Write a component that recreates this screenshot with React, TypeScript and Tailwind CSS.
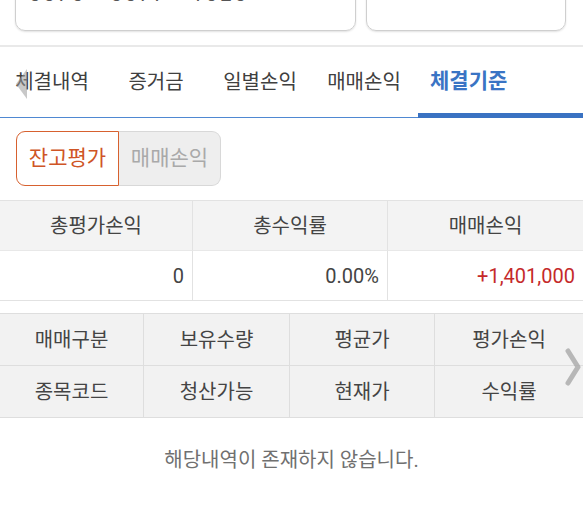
import React from "react";

const FONT = "font-['Roboto','Noto_Sans_CJK_KR',sans-serif]";

const tabs = ["체결내역", "증거금", "일별손익", "매매손익"];

const summary = [
  { label: "총평가손익", value: "0", red: false },
  { label: "총수익률", value: "0.00%", red: false },
  { label: "매매손익", value: "+1,401,000", red: true },
];

const gridRows = [
  ["매매구분", "보유수량", "평균가", "평가손익"],
  ["종목코드", "청산가능", "현재가", "수익률"],
];

export default function App() {
  return (
    <div className={`relative w-[583px] h-[517px] overflow-hidden bg-white ${FONT}`}>
      {/* account inputs, scrolled mostly out of view */}
      <div className="flex h-[45px] items-end pb-[14px]">
        <div className="ml-[15px] w-[341px] h-[70px] rounded-[10px] border border-[#cfcfcf] shadow-[0_1px_2px_rgba(0,0,0,0.12)] flex items-start pl-[13px] pt-[22px]">
          <span className="text-[20px] leading-none tracking-[3px] text-[#555]">5575 - 5577 - 1025</span>
        </div>
        <div className="ml-[10px] w-[200px] h-[70px] rounded-[10px] border border-[#cfcfcf] shadow-[0_1px_2px_rgba(0,0,0,0.12)]" />
      </div>
      <div className="h-[2px] bg-[#e9e9e9]" />

      {/* tabs */}
      <div className="relative flex h-[71px] border-b border-[#4f88d2]">
        {tabs.map((t) => (
          <div key={t} className="w-[104px] flex items-center justify-center text-[20px] text-[#404040]">
            {t}
          </div>
        ))}
        <div className="relative flex-1 flex items-center pl-[14px] text-[21px] font-bold text-[#3a74c4]">
          체결기준
          <div className="absolute left-[2px] right-0 bottom-[-1px] h-[5px] bg-[#3a72c2]" />
        </div>
        {/* left scroll hint */}
        <svg className="absolute left-[13px] top-[20px]" width="16" height="34" viewBox="0 0 16 34">
          <path d="M14 2 L3 17 L14 32 Z" fill="#9a9a9a" fillOpacity="0.55" />
        </svg>
      </div>

      {/* segment */}
      <div className="flex pl-[16px] pt-[13px]">
        <button className="w-[103px] h-[55px] rounded-l-[9px] border border-[#d7612f] bg-white text-[21px] text-[#cf5526]">
          잔고평가
        </button>
        <button className="w-[102px] h-[55px] rounded-r-[9px] border border-l-0 border-[#d8d8d8] bg-[#eeeeee] text-[21px] text-[#a9a9a9]">
          매매손익
        </button>
      </div>

      {/* summary table */}
      <div className="mt-[14px] grid grid-cols-[193px_195px_1fr] border-y border-[#e2e2e2]">
        {summary.map((s, i) => (
          <div
            key={s.label}
            className={`h-[50px] flex items-center justify-center bg-[#f3f3f3] text-[20px] text-[#444] border-b border-[#e8e8e8] ${i < 2 ? "border-r border-r-[#e2e2e2]" : ""}`}
          >
            {s.label}
          </div>
        ))}
        {summary.map((s, i) => (
          <div
            key={s.label + "v"}
            className={`h-[49px] flex items-center justify-end pr-[8px] text-[20px] ${s.red ? "text-[#c52a2a]" : "text-[#444]"} ${i < 2 ? "border-r border-[#e2e2e2]" : ""}`}
          >
            {s.value}
          </div>
        ))}
      </div>

      {/* column header grid */}
      <div className="relative mt-[12px] border-y border-[#dedede] bg-[#f2f2f2]">
        {gridRows.map((row, r) => (
          <div key={r} className={`grid grid-cols-[144px_146px_145px_1fr] ${r === 0 ? "border-b border-[#dedede]" : ""}`}>
            {row.map((c, i) => (
              <div
                key={c}
                className={`h-[51px] flex items-center justify-center text-[20px] text-[#444] ${i < 3 ? "border-r border-[#dedede]" : ""}`}
              >
                {c}
              </div>
            ))}
          </div>
        ))}
        <svg className="absolute right-[2px] top-[33px]" width="16" height="40" viewBox="0 0 16 40">
          <path d="M3 4 L13 20 L3 36" fill="none" stroke="#a8a8a8" strokeOpacity="0.8" strokeWidth="5" strokeLinecap="round" strokeLinejoin="round" />
        </svg>
      </div>

      {/* empty state */}
      <div className="pt-[27px] text-center text-[20px] text-[#707070]">해당내역이 존재하지 않습니다.</div>
    </div>
  );
}
